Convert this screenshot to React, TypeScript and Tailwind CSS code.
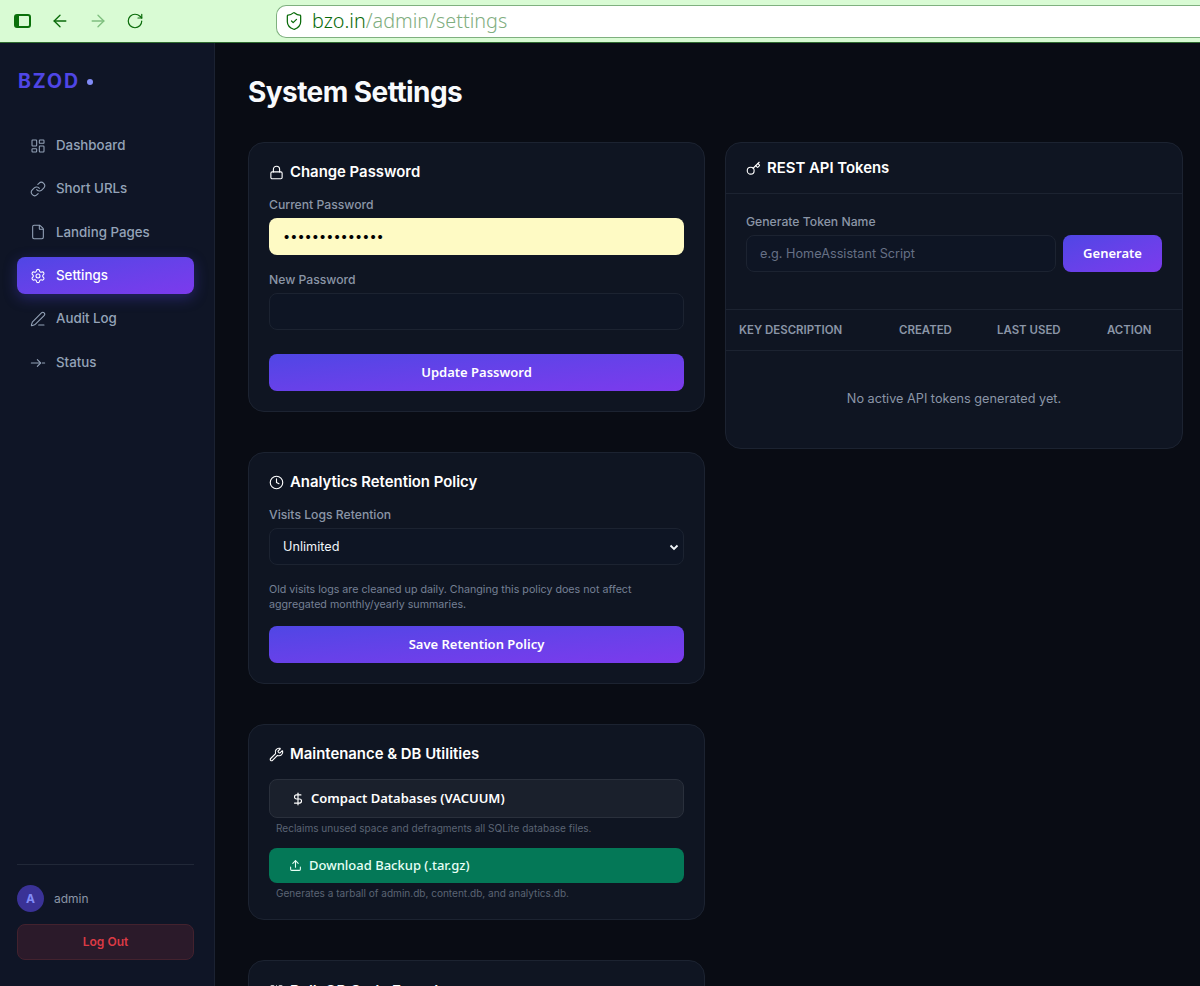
import React from 'react';
import {
    ArrowLeft,
    ArrowRight,
    Clock,
    DollarSign,
    File,
    Key,
    LayoutDashboard,
    Link,
    Lock,
    PenLine,
    QrCode,
    RotateCw,
    Settings,
    ShieldCheck,
    Upload,
    Wrench,
} from 'lucide-react';

// lucide has no match for the sidebar's status glyph
const StatusIcon = ({ className, strokeWidth }: { className?: string; strokeWidth?: number }) => (
    <svg className={className} viewBox="0 0 24 24" fill="none" stroke="currentColor" strokeWidth={strokeWidth} strokeLinecap="round" strokeLinejoin="round">
        <path d="M2 12h13" />
        <path d="M18.5 12H22" />
        <path d="m11 7 5 5-5 5" />
    </svg>
);

const navItems = [
    { label: 'Dashboard', icon: LayoutDashboard },
    { label: 'Short URLs', icon: Link },
    { label: 'Landing Pages', icon: File },
    { label: 'Settings', icon: Settings, active: true },
    { label: 'Audit Log', icon: PenLine },
    { label: 'Status', icon: StatusIcon },
];

const btnFont = "font-['Noto_Sans',sans-serif]";

const BrowserBar = () => (
    <div className="h-[43px] shrink-0 flex items-center bg-[#d9fbd4] border-b border-[#2f6b2f]">
        <div className="w-[276px] shrink-0 flex items-center pl-[14px] text-[#0a6b0a]">
            <div className="w-[17px] h-[14px] border-2 border-[#0a700a] rounded-[3px] border-l-[5px]" />
            <ArrowLeft className="ml-[19px] w-[20px] h-[20px]" strokeWidth={1.6} />
            <ArrowRight className="ml-[18px] w-[20px] h-[20px] text-[#7fbf7f]" strokeWidth={1.6} />
            <RotateCw className="ml-[18px] w-[18px] h-[18px]" strokeWidth={1.6} />
        </div>
        <div className="flex-1 h-[33px] flex items-center bg-white border border-[#7fb07f] rounded-l-[10px] border-r-0 pl-[7px]">
            <ShieldCheck className="w-[20px] h-[20px] text-[#0a6b0a]" strokeWidth={1.5} />
            <span className="ml-[8px] text-[19.8px] text-[#0a6b0a] font-['Noto_Sans',sans-serif] font-light">
                bzo.in<span className="text-[#7fae7f]">/admin/settings</span>
            </span>
        </div>
    </div>
);

const Sidebar = () => (
    <aside className="w-[215px] shrink-0 flex flex-col bg-[#0f1526] border-r border-[#1b2232] pl-[17px] pr-[20px]">
        <div className="h-[84px] flex items-center pl-[1px] pb-[7px] text-[19.5px] font-bold tracking-[0.1em] text-[#4f46e5]">
            BZOD
            <span className="ml-[7px] w-[6px] h-[6px] rounded-full bg-[#818cf8]" />
        </div>
        <nav className="flex flex-col gap-[7px]">
            {navItems.map((item) => {
                const Icon = item.icon;
                return (
                    <div
                        key={item.label}
                        className={
                            item.active
                                ? 'h-[36.4px] pt-[1px] flex items-center gap-[10px] px-[13px] rounded-lg text-white text-[13.3px] font-medium bg-gradient-to-br from-[#4f46e5] to-[#7c3aed] shadow-[0_4px_14px_rgba(79,70,229,0.35)]'
                                : 'h-[36.4px] pt-[1px] flex items-center gap-[10px] px-[13px] rounded-lg text-[#94a3b8] text-[13.3px] font-medium'
                        }
                    >
                        <Icon className="w-4 h-4" strokeWidth={1.6} />
                        {item.label}
                    </div>
                );
            })}
        </nav>
        <div className="mt-auto border-t border-[#212838] pt-[20px] pb-[26px]">
            <div className="flex items-center gap-[10px]">
                <div className="w-[27px] h-[27px] rounded-full bg-[#3a3296] flex items-center justify-center text-[#818cf8] text-xs font-bold">
                    A
                </div>
                <span className="text-[12px] text-[#8b95a7]">admin</span>
            </div>
            <div className="mt-[12px] h-[36px] flex items-center justify-center rounded-lg bg-[#2b1a2a] border border-[#43222e] text-[#dc3a45] text-xs font-semibold">
                Log Out
            </div>
        </div>
    </aside>
);

const Card = ({ children, className = '' }: { children: React.ReactNode; className?: string }) => (
    <div className={`bg-[#0f1522] border border-[#1c2331] rounded-2xl ${className}`}>{children}</div>
);

const CardTitle = ({ icon: Icon, title }: { icon: React.ElementType; title: string }) => (
    <h3 className="flex items-center gap-[6px] text-[14.9px] leading-[20px] font-semibold text-white">
        <Icon className="w-[15px] h-[15px]" strokeWidth={1.8} />
        {title}
    </h3>
);

const FieldLabel = ({ children }: { children: React.ReactNode }) => (
    <div className="text-[12.2px] leading-[16px] font-medium text-[#8b95a7]">{children}</div>
);

const PrimaryButton = ({ children }: { children: React.ReactNode }) => (
    <div className={`h-[37px] flex items-center justify-center rounded-lg text-white text-[13px] font-semibold ${btnFont} bg-gradient-to-br from-[#4f46e5] to-[#7c3aed]`}>
        {children}
    </div>
);

const App = () => (
    <div className="w-[1200px] h-[986px] overflow-hidden flex flex-col bg-[#090c14] font-['Inter',sans-serif]">
        <BrowserBar />
        <div className="flex-1 min-h-0 flex">
            <Sidebar />
            <main className="flex-1 min-w-0 pl-[33px] pr-[17px] pt-[30px]">
                <h1 className="text-[28px] leading-[38px] font-bold tracking-[-0.02em] text-[#f8fafc]">System Settings</h1>
                <div className="mt-[31px] grid grid-cols-[457px_458px] gap-x-[20px] items-start">
                    <div className="flex flex-col gap-[40px]">
                        <Card className="h-[270px] px-[20px] pt-[19px]">
                            <CardTitle icon={Lock} title="Change Password" />
                            <div className="mt-[15px]"><FieldLabel>Current Password</FieldLabel></div>
                            <div className="mt-[5px] h-[37px] flex items-center px-[14px] rounded-lg bg-[#fefac4] text-black text-[12.8px]">
                                ••••••••••••••
                            </div>
                            <div className="mt-[17px]"><FieldLabel>New Password</FieldLabel></div>
                            <div className="mt-[5px] h-[37px] rounded-lg bg-[#0e1524] border border-[#1c2331]" />
                            <div className="mt-[24px]"><PrimaryButton>Update Password</PrimaryButton></div>
                        </Card>

                        <Card className="h-[232px] px-[20px] pt-[19px]">
                            <CardTitle icon={Clock} title="Analytics Retention Policy" />
                            <div className="mt-[15px]"><FieldLabel>Visits Logs Retention</FieldLabel></div>
                            <div className="mt-[5px] h-[37px] flex items-center justify-between pl-[13px] pr-[3px] rounded-lg bg-[#0e1524] border border-[#1c2331] text-[12.7px] text-[#f1f5f9]">
                                Unlimited
                                <svg className="w-[12px] h-[12px]" viewBox="0 0 12 12" fill="none" stroke="currentColor" strokeWidth="1.8">
                                    <path d="M2.5 4.5 6 8 9.5 4.5" />
                                </svg>
                            </div>
                            <p className="mt-[17px] text-[10.7px] leading-[15px] text-[#758095]">
                                Old visits logs are cleaned up daily. Changing this policy does not affect aggregated monthly/yearly summaries.
                            </p>
                            <div className="mt-[14px]"><PrimaryButton>Save Retention Policy</PrimaryButton></div>
                        </Card>

                        <Card className="h-[196px] px-[20px] pt-[19px]">
                            <CardTitle icon={Wrench} title="Maintenance & DB Utilities" />
                            <div className={`mt-[15px] h-[39px] flex items-center pl-[21px] gap-[6px] rounded-lg bg-[#1a202c] border border-[#2a303c] text-white text-[13px] font-semibold ${btnFont}`}>
                                <DollarSign className="w-[14px] h-[14px]" strokeWidth={2} />
                                Compact Databases (VACUUM)
                            </div>
                            <p className="mt-[3px] pl-[7px] text-[10.05px] leading-[15px] text-[#5b6474]">
                                Reclaims unused space and defragments all SQLite database files.
                            </p>
                            <div className={`mt-[12px] h-[35px] flex items-center pl-[20px] gap-[7px] rounded-lg bg-[#047857] text-[#e6fff5] text-[13px] font-medium ${btnFont}`}>
                                <Upload className="w-[13px] h-[13px]" strokeWidth={2} />
                                Download Backup (.tar.gz)
                            </div>
                            <p className="mt-[3px] pl-[7px] text-[10.05px] leading-[15px] text-[#5b6474]">
                                Generates a tarball of admin.db, content.db, and analytics.db.
                            </p>
                        </Card>

                        <Card className="h-[200px] px-[20px] pt-[20px]">
                            <CardTitle icon={QrCode} title="Bulk QR Code Export" />
                        </Card>
                    </div>

                    <Card className="h-[307px] flex flex-col">
                        <div className="h-[51px] flex items-center px-[20px] border-b border-[#1c2331]">
                            <CardTitle icon={Key} title="REST API Tokens" />
                        </div>
                        <div className="h-[116px] px-[20px] pt-[20px] border-b border-[#1c2331]">
                            <FieldLabel>Generate Token Name</FieldLabel>
                            <div className="mt-[5px] flex gap-[7px]">
                                <div className="flex-1 h-[37px] flex items-center px-[13px] rounded-lg bg-[#0e1524] border border-[#1c2331] text-[12.7px] text-[#667085]">
                                    e.g. HomeAssistant Script
                                </div>
                                <div className={`w-[99px] h-[37px] flex items-center justify-center rounded-lg text-white text-[13px] font-semibold ${btnFont} bg-gradient-to-br from-[#4f46e5] to-[#7c3aed]`}>
                                    Generate
                                </div>
                            </div>
                        </div>
                        <div className="h-[41px] pt-[1px] flex items-center text-[11.45px] font-semibold text-[#8b95a7] border-b border-[#1c2331] pl-[13px]">
                            <span className="w-[160px]">KEY DESCRIPTION</span>
                            <span className="w-[98px]">CREATED</span>
                            <span className="w-[110px]">LAST USED</span>
                            <span>ACTION</span>
                        </div>
                        <div className="flex-1 flex items-center justify-center pb-[2px] text-[12.7px] text-[#8b95a7]">
                            No active API tokens generated yet.
                        </div>
                    </Card>
                </div>
            </main>
        </div>
    </div>
);

export default App;
